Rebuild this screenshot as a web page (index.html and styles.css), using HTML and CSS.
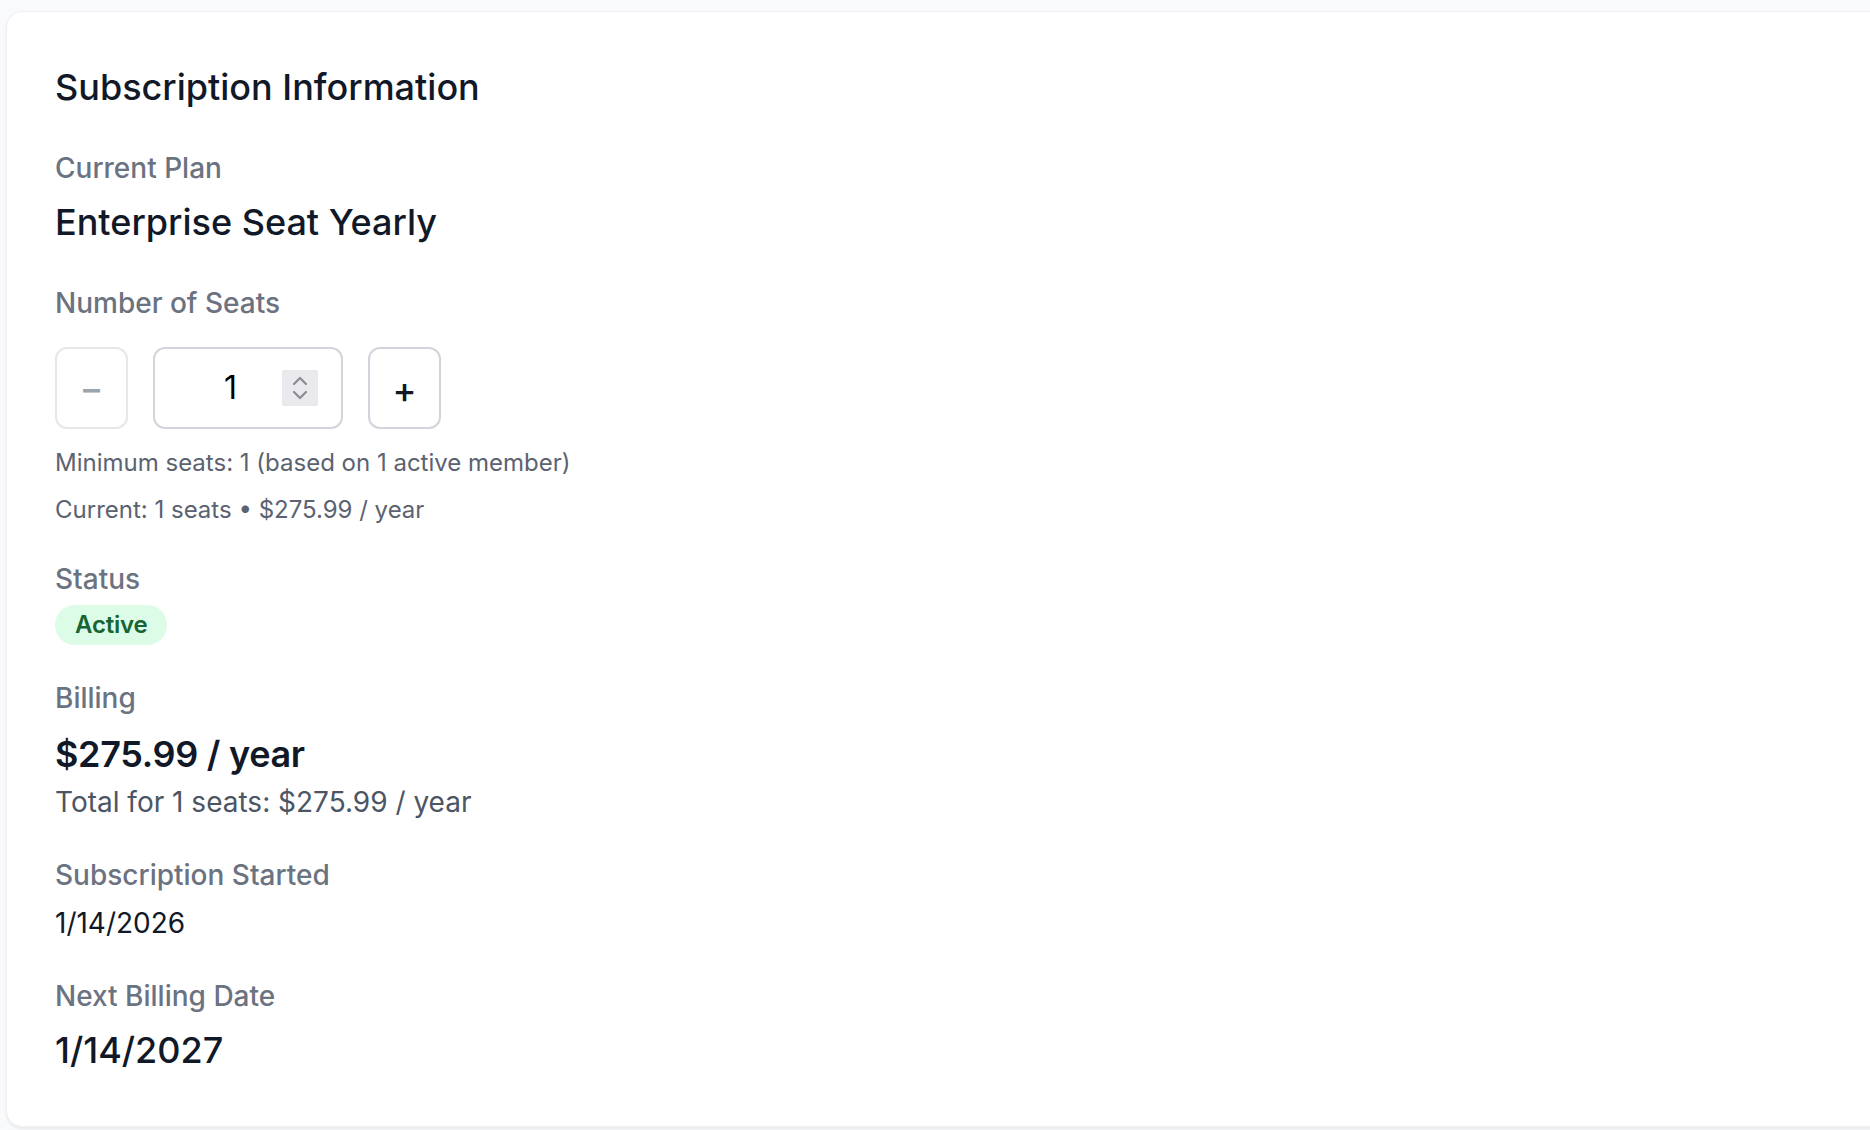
FILE: index.html
```html
<!DOCTYPE html>
<html lang="en">
<head>
<meta charset="utf-8">
<title>Subscription Information</title>
<link rel="stylesheet" href="styles.css">
</head>
<body>
<div class="page">
  <section class="card">
    <h2 class="title">Subscription Information</h2>
    <div class="sections">
      <div class="field">
        <div class="label">Current Plan</div>
        <div class="value-lg">Enterprise Seat Yearly</div>
      </div>

      <div class="field">
        <div class="label label-seats">Number of Seats</div>
        <div class="seat-row">
          <button class="btn btn-disabled" type="button">−</button>
          <div class="seat-input">
            <span class="seat-num">1</span>
            <span class="spinner">
              <svg width="22" height="30" viewBox="0 0 22 30" fill="none" stroke="#8b8b92" stroke-width="2.2" stroke-linecap="round" stroke-linejoin="round">
                <path d="M5 11 L11 5 L17 11"/>
                <path d="M5 19 L11 25 L17 19"/>
              </svg>
            </span>
          </div>
          <button class="btn" type="button">+</button>
        </div>
        <div class="hint hint-min">Minimum seats: 1 (based on 1 active member)</div>
        <div class="hint">Current: 1 seats • $275.99 / year</div>
      </div>

      <div class="field">
        <div class="label">Status</div>
        <span class="badge">Active</span>
      </div>

      <div class="field">
        <div class="label">Billing</div>
        <div class="value-lg value-bold">$275.99 / year</div>
        <div class="sub">Total for 1 seats: $275.99 / year</div>
      </div>

      <div class="field">
        <div class="label label-date">Subscription Started</div>
        <div class="value-sm">1/14/2026</div>
      </div>

      <div class="field">
        <div class="label">Next Billing Date</div>
        <div class="value-lg">1/14/2027</div>
      </div>
    </div>
  </section>
</div>
</body>
</html>
```

FILE: styles.css
```css
html, body {
  margin: 0;
  padding: 0;
}

body {
  background: #f9fafb;
  font-family: Inter, "Noto Sans", "Liberation Sans", sans-serif;
  color: #111827;
  overflow: hidden;
  height: 1130px;
}

.page {
  padding: 11px 0 0 6px;
}

.card {
  box-sizing: border-box;
  width: 1920px;
  height: 1116px;
  background: #ffffff;
  border: 1px solid #eef0f3;
  border-radius: 16px;
  box-shadow: 0 2px 3px rgba(17, 24, 39, 0.07);
  padding: 47px 48px 47px 48px;
}

.title {
  margin: 0 0 33px 0;
  font-size: 36px;
  line-height: 56px;
  font-weight: 500;
  color: #111827;
}

.sections {
  display: flex;
  flex-direction: column;
  gap: 33px;
}

.field {
  display: flex;
  flex-direction: column;
  align-items: flex-start;
}

.label {
  font-size: 28px;
  line-height: 40px;
  font-weight: 500;
  color: #6b7280;
  margin-bottom: 6px;
}

.label-seats {
  margin-bottom: 24px;
}

.label-date {
  margin-bottom: 8px;
}

.value-lg {
  font-size: 36px;
  line-height: 56px;
  font-weight: 500;
  color: #111827;
}

.value-bold {
  font-weight: 600;
  letter-spacing: -0.3px;
  margin-top: 2px;
}

.value-sm {
  font-size: 28px;
  line-height: 40px;
  font-weight: 400;
  color: #111827;
}

.sub {
  font-size: 28px;
  line-height: 40px;
  color: #4b5563;
}

.seat-row {
  display: flex;
  align-items: center;
  gap: 25px;
  margin-bottom: 18px;
}

.btn {
  box-sizing: border-box;
  width: 73px;
  height: 82px;
  margin: 0;
  padding: 0;
  background: #ffffff;
  border: 2px solid #d1d5db;
  border-radius: 12px;
  font-family: Inter, "Noto Sans", "Liberation Sans", sans-serif;
  font-size: 36px;
  font-weight: 500;
  line-height: 1;
  color: #111827;
  display: flex;
  align-items: center;
  justify-content: center;
  padding-top: 3px;
}

.btn-disabled {
  border-color: #e5e7eb;
  color: #9ca3af;
  padding-top: 0;
}

.seat-input {
  box-sizing: border-box;
  width: 190px;
  height: 82px;
  border: 2px solid #d1d5db;
  border-radius: 12px;
  background: #ffffff;
  display: flex;
  align-items: center;
  padding: 0 23px 0 24px;
}

.seat-num {
  flex: 1;
  text-align: center;
  font-size: 32px;
  line-height: 48px;
  color: #000000;
}

.spinner {
  width: 36px;
  height: 36px;
  background: #e9e9ee;
  display: flex;
  align-items: center;
  justify-content: center;
}

.hint {
  font-size: 24px;
  line-height: 32px;
  color: #5b6270;
}

.hint-min {
  margin-bottom: 15px;
}

.badge {
  display: inline-block;
  box-sizing: border-box;
  height: 40px;
  padding: 0 20px;
  border-radius: 9999px;
  background: #dcfce7;
  color: #166534;
  font-size: 24px;
  line-height: 40px;
  font-weight: 600;
  letter-spacing: -0.2px;
}
```
